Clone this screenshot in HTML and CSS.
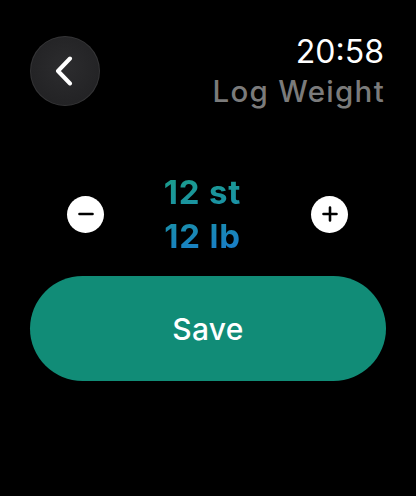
FILE: index.html
```
<!DOCTYPE html>
<html lang="en-US">
<head>
    <meta charset="UTF-8">
    <title>Log Weight</title>
    <link rel="stylesheet" href="styles.css">
</head>
<body>
    <div class="watch">
        <div class="top-bar">
            <button class="back-btn" title="Back">
                <svg width="22" height="30" viewBox="0 0 22 30">
                    <path d="M17 2.5 L5 15 L17 27.5" fill="none" stroke="#fff" stroke-width="4" stroke-linecap="round" stroke-linejoin="round"/>
                </svg>
            </button>
            <div class="title-block">
                <div class="clock">20:58</div>
                <div class="screen-title">Log Weight</div>
            </div>
        </div>

        <div class="stepper">
            <button class="step-btn" title="Decrease">
                <svg width="20" height="20" viewBox="0 0 20 20">
                    <path d="M3.5 10 H16.5" stroke="#000" stroke-width="2.6" stroke-linecap="round"/>
                </svg>
            </button>
            <div class="weight-value">
                <span>12 st</span>
                <span>12 lb</span>
            </div>
            <button class="step-btn" title="Increase">
                <svg width="20" height="20" viewBox="0 0 20 20">
                    <path d="M3.5 10 H16.5 M10 3.5 V16.5" stroke="#000" stroke-width="2.6" stroke-linecap="round"/>
                </svg>
            </button>
        </div>

        <button class="save-btn">Save</button>
    </div>
</body>
</html>
```

FILE: styles.css
```
body {
    margin: 0;
    background: #000;
    font-family: Inter, 'Noto Sans', sans-serif;
}

button {
    font-family: inherit;
    border: none;
    padding: 0;
    cursor: pointer;
}

.watch {
    width: 416px;
    height: 496px;
    display: flex;
    flex-direction: column;
}

.top-bar {
    display: flex;
    justify-content: space-between;
    align-items: flex-start;
    padding: 34px 32px 0 30px;
}

.back-btn {
    width: 70px;
    height: 70px;
    margin-top: 2px;
    border-radius: 50%;
    background: radial-gradient(circle at 50% 45%, #2c2c2e 0%, #232325 70%, #333 100%);
    box-shadow: inset 0 0 0 1px rgba(255, 255, 255, 0.08);
    display: flex;
    align-items: center;
    justify-content: center;
}

.back-btn svg {
    margin-left: -2px;
}

.title-block {
    text-align: right;
}

.clock {
    color: #fff;
    font-size: 32px;
    line-height: 36px;
    font-weight: 400;
}

.screen-title {
    color: #7b7b7b;
    font-size: 29.5px;
    line-height: 34px;
    font-weight: 500;
    letter-spacing: 1.3px;
    margin-top: 4px;
    margin-right: -1px;
}

.stepper {
    display: flex;
    justify-content: space-between;
    align-items: center;
    padding: 0 68px 0 67px;
    margin-top: 62px;
}

.step-btn {
    width: 37px;
    height: 37px;
    border-radius: 50%;
    background: #fff;
    display: flex;
    align-items: center;
    justify-content: center;
}

.weight-value {
    display: flex;
    flex-direction: column;
    align-items: center;
    font-size: 33px;
    line-height: 44px;
    font-weight: 700;
    letter-spacing: 0.8px;
    margin-right: 10px;
    background: linear-gradient(170deg, #1b9f86 0%, #1a90a8 50%, #1878cf 100%);
    -webkit-background-clip: text;
    background-clip: text;
    color: transparent;
}

.save-btn {
    margin: 18px 30px 0;
    height: 105px;
    border-radius: 53px;
    background: #118c77;
    color: #fff;
    font-size: 30px;
    font-weight: 500;
    letter-spacing: 0.3px;
}
```
